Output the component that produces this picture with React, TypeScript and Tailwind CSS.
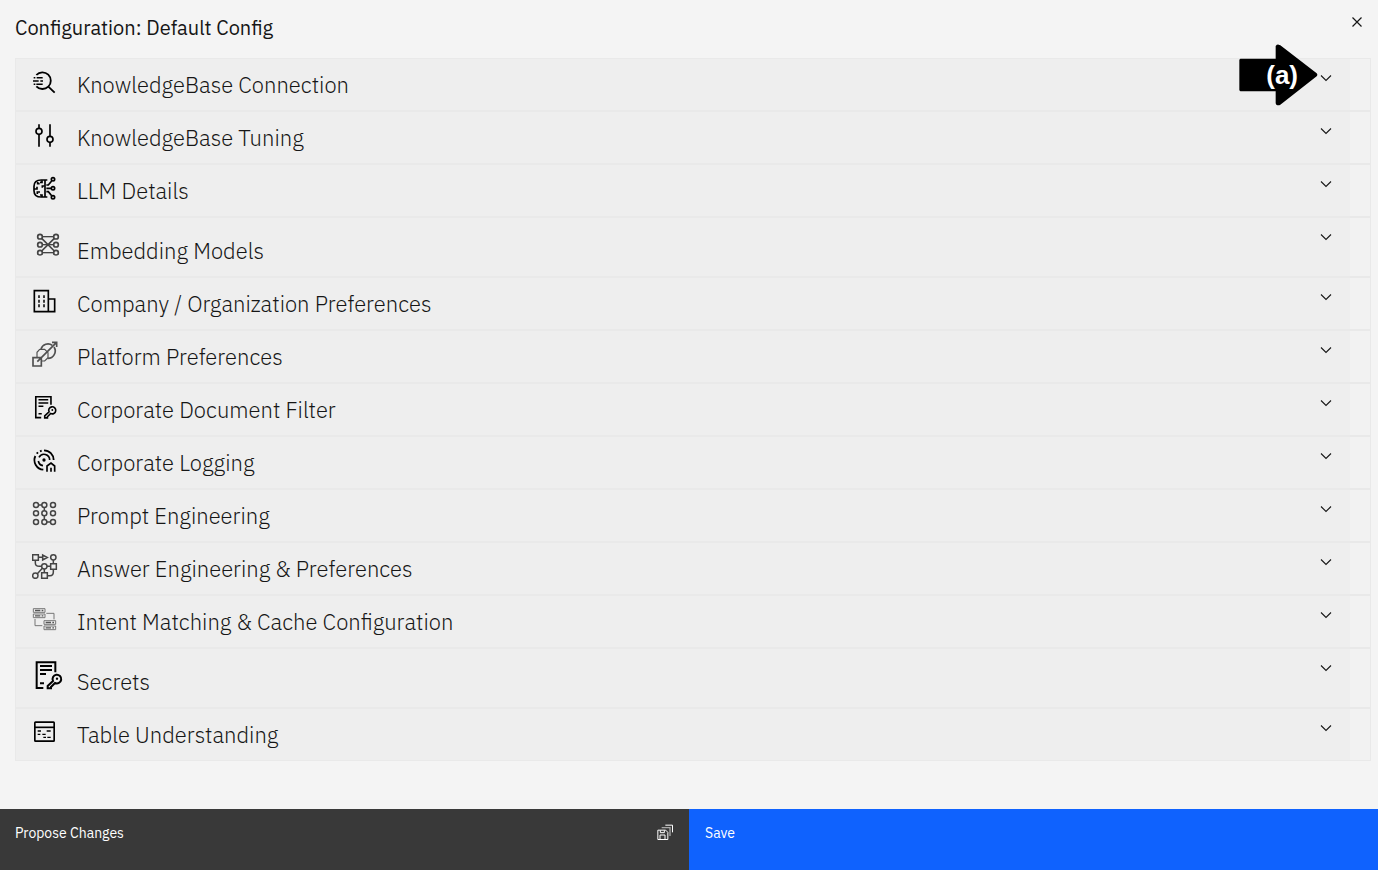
import type { ReactNode } from "react";

type IconProps = {
  children: ReactNode;
  size?: "md" | "lg";
  box?: string;
  weight?: number;
  tone?: string;
};

function Icon({ children, size = "md", box = "0 0 78 78", weight = 5, tone = "text-black" }: IconProps) {
  return (
    <svg
      aria-hidden="true"
      viewBox={box}
      fill="none"
      stroke="currentColor"
      strokeWidth={weight}
      className={`${size === "lg" ? "mb-px size-8" : "size-[26px]"} ${tone}`}
    >
      {children}
    </svg>
  );
}

const SearchData = () => (
  <Icon weight={5.5}>
    <path d="M13 18A25 25 0 1 1 13 52M49 53L68 71" />
    <path strokeWidth="4.5" d="M5 26h5M14 26h18M3 36h17M25 36h8M5 46h5M13 46h19" />
  </Icon>
);

const Sliders = () => (
  <Icon>
    <circle cx="21" cy="28" r="9" />
    <circle cx="54" cy="52" r="9" />
    <path d="M21 7v12M21 37v37M54 7v36M54 61v13" />
  </Icon>
);

const Brain = () => (
  <Icon weight={5}>
    <path d="M46 15h-7v51h7M39 15H28C13 15 6 22 6 34v13c0 12 7 19 22 19h11" />
    <path d="M17 21v5h6M6 42h9v-7M30 16v6h-6M38 33h-7v5M16 57v-6h8M30 66v-6h-6" />
    <path d="M43 30h6l10-12M43 40h14M43 50h6l10 12" />
    <circle cx="63" cy="13" r="5" />
    <circle cx="63" cy="40" r="5" />
    <circle cx="63" cy="67" r="5" />
  </Icon>
);

const Network = () => (
  <Icon size="lg" box="0 0 96 96" tone="text-[#444444]">
    {[26, 50, 74].map((y) => (
      <g key={y}>
        <circle cx="24" cy={y} r="7" />
        <circle cx="72" cy={y} r="7" />
        <path strokeWidth="4" d={`M31 ${y}h34`} />
      </g>
    ))}
    <path d="M29 31L67 69M67 31L29 69" />
  </Icon>
);

const Building = () => (
  <Icon>
    <path d="M7 8H49V71H7ZM49 33H68V71H49" />
    <path strokeWidth="4.5" d="M21 22v8M21 35v9M21 49v9M36 22v8M36 35v9M36 49v9" />
  </Icon>
);

const Shapes = () => (
  <Icon weight={5} tone="text-[#505050]">
    <path d="M3 50H28V75H3ZM16 62L73 5M60 4H74V18" />
    <path strokeWidth="3.5" d="M23 25H38L48 35V50L38 60H28M15 48V34L23 25" />
    <path d="M27 24A22 22 0 0 1 61 13M66 18A22 22 0 0 1 47 52" />
  </Icon>
);

const DocumentKey = ({ size }: { size?: "md" | "lg" }) => (
  <Icon size={size} box="0 0 96 96" weight={6}>
    <path d="M70 40V10H14V87H34" />
    <path d="M24 21H60M24 33H60M24 45H42M24 73H36" />
    <path d="M63 66A13 13 0 1 1 69 72L57 84V88H47V81Z" />
    <circle cx="75" cy="59" r="3.5" fill="currentColor" stroke="none" />
  </Icon>
);

const Disc = () => (
  <Icon weight={5.5}>
    <path d="M36 10A29 29 0 0 1 65 39M10 27A29 29 0 0 0 34 68M14 20l4-4M24 13l5-2" />
    <path strokeWidth="5" d="M21 31A17 17 0 0 1 53 39M19 42A17 17 0 0 0 33 56" />
    <circle cx="36" cy="39" r="5" fill="currentColor" stroke="none" />
    <path strokeWidth="5" d="M45 74V57L57 48L68 57V74M57 74V62" />
  </Icon>
);

const PatternDots = () => (
  <Icon weight={4.5} tone="text-[#444444]">
    {[15, 40, 66].map((y) => [12, 37, 63].map((x) => <circle key={`${x}-${y}`} cx={x} cy={y} r="7.5" />))}
    <path d="M19 15H30M37 23V32M37 48V59M45 66H56" />
  </Icon>
);

const Flow = () => (
  <Icon weight={4.5} tone="text-[#444444]">
    <path d="M2 5H19V22H2ZM56 32H73V49H56ZM29 59H46V76H29ZM32 6V21L46 13.500Z" />
    <circle cx="64" cy="13" r="8" />
    <circle cx="37" cy="40" r="8" />
    <circle cx="10" cy="68" r="8" />
    <path d="M19 13H32M64 21V32M45 40H56M37 48V59M16 62L31 46M10 22V30Q10 40 22 40H29M64 49V57Q64 68 54 68H46" />
  </Icon>
);

const Servers = () => (
  <Icon weight={3} tone="text-[#777777]">
    <path d="M4 8H39V19H4ZM4 24H39V35H4ZM36 44H71V55H36ZM36 60H71V71H36Z" />
    <path d="M43 22H66V40M9 39V59H31" />
    <path strokeWidth="4" className="text-[#555555]" stroke="currentColor" d="M9 13.500H25M29 13.500H34M9 29.500H25M29 29.500H34M41 49.500H57M61 49.500H66M41 65.500H57M61 65.500H66" />
  </Icon>
);

const TableIcon = () => (
  <Icon>
    <rect x="8.500" y="9.500" width="58" height="57" rx="2" />
    <path d="M8 25H67" />
    <path strokeWidth="4" d="M17 36H27M44 36H56M17 46H25M31 46H41M34 55H42M46 55H56" />
  </Icon>
);

const Chevron = () => (
  <svg aria-hidden="true" viewBox="0 0 16 16" fill="none" stroke="currentColor" className="mt-[11px] size-4 shrink-0 text-[#161616]">
    <path strokeWidth="1.100" d="M3 5.500l5 5 5-5" />
  </svg>
);

const sections: { title: string; icon: ReactNode }[] = [
  { title: "KnowledgeBase Connection", icon: <SearchData /> },
  { title: "KnowledgeBase Tuning", icon: <Sliders /> },
  { title: "LLM Details", icon: <Brain /> },
  { title: "Embedding Models", icon: <Network /> },
  { title: "Company / Organization Preferences", icon: <Building /> },
  { title: "Platform Preferences", icon: <Shapes /> },
  { title: "Corporate Document Filter", icon: <DocumentKey /> },
  { title: "Corporate Logging", icon: <Disc /> },
  { title: "Prompt Engineering", icon: <PatternDots /> },
  { title: "Answer Engineering & Preferences", icon: <Flow /> },
  { title: "Intent Matching & Cache Configuration", icon: <Servers /> },
  { title: "Secrets", icon: <DocumentKey size="lg" /> },
  { title: "Table Understanding", icon: <TableIcon /> },
];

function Callout() {
  return (
    <div className="pointer-events-none absolute -top-[15px] right-[52px] h-[62px] w-[79px]">
      <svg aria-hidden="true" viewBox="0 0 237 186" className="size-full">
        <path
          fill="#000"
          d="M4 44H110V6Q114 1 119 2L124 4L233 88Q237 92 233 97L124 182Q118 186 112 182L110 178V142H4L1 139V47Z"
        />
      </svg>
      <span className="absolute inset-y-0 right-5 flex items-center font-['Liberation_Sans',sans-serif] text-[26px] font-bold text-white">
        (a)
      </span>
    </div>
  );
}

function Section({ title, icon, callout }: { title: string; icon: ReactNode; callout?: boolean }) {
  return (
    <li className="relative border border-[#e9e9e9] bg-[#f2f2f2] pr-5">
      <h2>
        <button type="button" className="flex w-full items-start bg-[#eeeeee] pr-4 pl-4 text-left">
          <span className="w-[45px] shrink-0 pt-2.5 pb-[15px]">{icon}</span>
          <span className="flex-1 self-end pb-[9px] text-[22px] leading-8 font-light text-[#161616]">{title}</span>
          <Chevron />
        </button>
      </h2>
      {callout && <Callout />}
    </li>
  );
}

export default function App() {
  return (
    <div className="flex min-h-screen flex-col bg-[#f4f4f4] font-['IBM_Plex_Sans',Roboto,sans-serif] text-[#161616]">
      <header className="flex items-start justify-between pt-3.5 pr-[13px] pb-4 pl-[15px]">
        <h1 className="text-xl leading-7">Configuration: Default Config</h1>
        <button type="button" aria-label="Close">
          <svg aria-hidden="true" viewBox="0 0 16 16" fill="none" stroke="currentColor" strokeWidth="1.200" className="size-4">
            <path d="M3.500 3.500l9 9M12.500 3.500l-9 9" />
          </svg>
        </button>
      </header>
      <main className="pr-[7px] pb-12 pl-[15px]">
        <ul>
          {sections.map((section, index) => (
            <Section key={section.title} {...section} callout={index === 0} />
          ))}
        </ul>
      </main>
      <footer className="mt-auto grid grid-cols-2 text-sm leading-[18px] text-white">
        <button type="button" className="flex items-start justify-between bg-[#393939] pt-[15px] pr-4 pb-7 pl-[15px] text-left">
          Propose Changes
          <svg aria-hidden="true" viewBox="0 0 48 48" fill="none" stroke="currentColor" strokeWidth="3" className="size-4">
            <path d="M2.500 18.500H26L32.500 25V46.500H2.500ZM9 46V33H24V46M10 19V26H22V19" />
            <path className="text-[#a8a8a8]" stroke="currentColor" strokeWidth="4" d="M14 11H39V36" />
            <path d="M25 3.500H46.500V25" />
          </svg>
        </button>
        <button type="button" className="bg-[#0f62fe] pt-[15px] pr-4 pb-7 pl-4 text-left">
          Save
        </button>
      </footer>
    </div>
  );
}
